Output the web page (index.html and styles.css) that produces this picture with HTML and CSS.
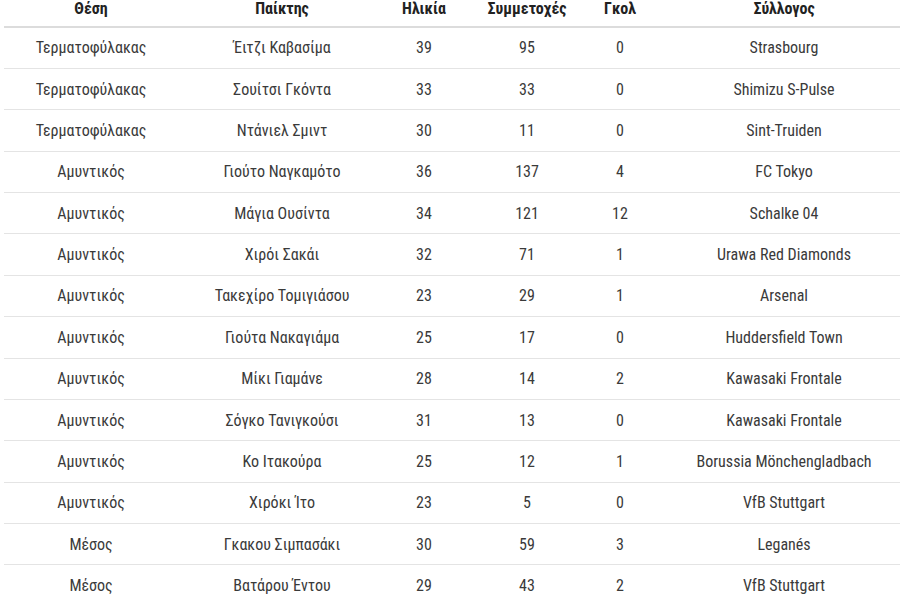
FILE: index.html
```html
<!DOCTYPE html>
<html lang="el">
<head>
<meta charset="utf-8">
<title>Ομάδα</title>
<link rel="stylesheet" href="styles.css">
</head>
<body>
<table class="squad">
  <colgroup>
    <col class="c-pos"><col class="c-name"><col class="c-age"><col class="c-caps"><col class="c-goals"><col class="c-club">
  </colgroup>
  <thead>
    <tr><th>Θέση</th><th>Παίκτης</th><th>Ηλικία</th><th>Συμμετοχές</th><th>Γκολ</th><th>Σύλλογος</th></tr>
  </thead>
  <tbody>
    <tr><td>Τερματοφύλακας</td><td>Έιτζι Καβασίμα</td><td>39</td><td>95</td><td>0</td><td>Strasbourg</td></tr>
    <tr><td>Τερματοφύλακας</td><td>Σουίτσι Γκόντα</td><td>33</td><td>33</td><td>0</td><td>Shimizu S-Pulse</td></tr>
    <tr><td>Τερματοφύλακας</td><td>Ντάνιελ Σμιντ</td><td>30</td><td>11</td><td>0</td><td>Sint-Truiden</td></tr>
    <tr><td>Αμυντικός</td><td>Γιούτο Ναγκαμότο</td><td>36</td><td>137</td><td>4</td><td>FC Tokyo</td></tr>
    <tr><td>Αμυντικός</td><td>Μάγια Ουσίντα</td><td>34</td><td>121</td><td>12</td><td>Schalke 04</td></tr>
    <tr><td>Αμυντικός</td><td>Χιρόι Σακάι</td><td>32</td><td>71</td><td>1</td><td>Urawa Red Diamonds</td></tr>
    <tr><td>Αμυντικός</td><td>Τακεχίρο Τομιγιάσου</td><td>23</td><td>29</td><td>1</td><td>Arsenal</td></tr>
    <tr><td>Αμυντικός</td><td>Γιούτα Νακαγιάμα</td><td>25</td><td>17</td><td>0</td><td>Huddersfield Town</td></tr>
    <tr><td>Αμυντικός</td><td>Μίκι Γιαμάνε</td><td>28</td><td>14</td><td>2</td><td>Kawasaki Frontale</td></tr>
    <tr><td>Αμυντικός</td><td>Σόγκο Τανιγκούσι</td><td>31</td><td>13</td><td>0</td><td>Kawasaki Frontale</td></tr>
    <tr><td>Αμυντικός</td><td>Κο Ιτακούρα</td><td>25</td><td>12</td><td>1</td><td>Borussia Mönchengladbach</td></tr>
    <tr><td>Αμυντικός</td><td>Χιρόκι Ίτο</td><td>23</td><td>5</td><td>0</td><td>VfB Stuttgart</td></tr>
    <tr><td>Μέσος</td><td>Γκακου Σιμπασάκι</td><td>30</td><td>59</td><td>3</td><td>Leganés</td></tr>
    <tr><td>Μέσος</td><td>Βατάρου Έντου</td><td>29</td><td>43</td><td>2</td><td>VfB Stuttgart</td></tr>
  </tbody>
</table>
</body>
</html>
```
FILE: styles.css
```css
html, body {
  margin: 0;
  padding: 0;
  background: #ffffff;
  overflow: hidden;
}

.squad {
  margin: -10px 0 0 4px;
  width: 916px;
  border-collapse: collapse;
  table-layout: fixed;
  font-family: "Roboto Condensed", Roboto, "Liberation Sans", sans-serif;
  font-size: 16px;
  color: #3a3a3a;
}

.c-pos { width: 174px; }
.c-name { width: 208px; }
.c-age { width: 76px; }
.c-caps { width: 130px; }
.c-goals { width: 56px; }
.c-club { width: 272px; }

.squad th,
.squad td {
  padding: 0;
  text-align: center;
  vertical-align: middle;
  white-space: nowrap;
  box-sizing: border-box;
}

.squad th {
  height: 37px;
  font-weight: 700;
  color: #222222;
  border-bottom: 2px solid #dcdcdc;
}

.squad td {
  height: 41.38px;
  border-bottom: 1px solid #e4e4e4;
}
```
